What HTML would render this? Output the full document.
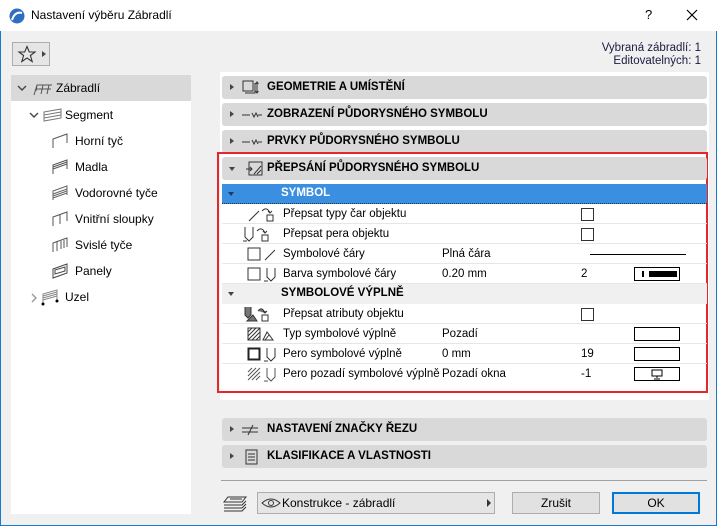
<!DOCTYPE html>
<html><head><meta charset="utf-8"><style>
*{box-sizing:border-box;margin:0;padding:0}
body{width:717px;height:526px;overflow:hidden;font-family:"Liberation Sans",sans-serif;font-size:12px;color:#000;background:#f0f0f0;position:relative}
.a{position:absolute}
.win{position:absolute;left:0;top:0;width:717px;height:526px;border:1px solid #1979ca;border-top:none}
.title{left:0;top:0;width:717px;height:31px;background:#fff}
.hdr{position:absolute;left:222px;width:485px;height:23px;background:#d9d9d9;border-radius:3px;font-weight:bold;font-size:11.5px;line-height:23px}
.hdr .t{position:absolute;left:45px}
.tri{position:absolute;left:8px;top:8px;width:0;height:0;border-left:4px solid #444;border-top:3.5px solid transparent;border-bottom:3.5px solid transparent}
.row{position:absolute;left:222px;width:485px;height:20px;line-height:20px;border-bottom:1px solid #e6e6e6;font-size:11.5px}
.row .l{position:absolute;left:61px}
.row .v{position:absolute;left:220px}
.row .c{position:absolute;left:359px}
.row svg{margin-left:-6px}
.cb{position:absolute;left:359px;top:4px;width:13px;height:13px;border:1px solid #333;background:#fff}
.sw{position:absolute;left:412px;top:3px;width:46px;height:14px;border:1px solid #000;background:#fff}
.tree{font-size:12px}
.tree div{position:absolute;height:20px;line-height:20px}
</style></head><body>
<div class="win"></div>
<div class="a title"></div>
<svg class="a" style="left:9px;top:8px" width="16" height="16"><circle cx="8" cy="8" r="7.5" fill="#2e6fc2"/><path d="M3 12 Q6 3 13 5" stroke="#fff" stroke-width="2" fill="none"/></svg>
<div class="a" style="left:31px;top:8px;font-size:12px">Nastavení výběru Zábradlí</div>
<div class="a" style="left:645px;top:7px;font-size:13px">?</div>
<svg class="a" style="left:686px;top:9px" width="12" height="12"><path d="M1 1L11 11M11 1L1 11" stroke="#000" stroke-width="1.2"/></svg>

<div class="a" style="left:12px;top:42px;width:38px;height:24px;border:1px solid #adadad;background:#e5e5e5"></div>
<svg class="a" style="left:17px;top:45px" width="20" height="18"><path d="M10 1.5L12.3 7H18L13.4 10.5L15.2 16.5L10 13L4.8 16.5L6.6 10.5L2 7H7.7Z" fill="none" stroke="#333" stroke-width="1.1"/></svg>
<div class="a" style="left:42px;top:51px;border-left:4px solid #444;border-top:3px solid transparent;border-bottom:3px solid transparent"></div>
<div class="a" style="right:16px;top:42px;text-align:right;font-size:11.5px;line-height:13px;color:#1a1a40">Vybraná zábradlí: 1<br>Editovatelných: 1</div>

<div class="a" style="left:11px;top:75px;width:180px;height:439px;background:#fff"></div>
<div class="a" style="left:11px;top:75px;width:180px;height:26px;background:#d9d9d9"></div>
<div class="tree">
<svg class="a" style="left:17px;top:85px" width="10" height="7"><path d="M1 1L5 5L9 1" stroke="#444" stroke-width="1.4" fill="none"/></svg>
<svg class="a" style="left:33px;top:82px" width="20" height="14"><path d="M1 13L4 3H19M4 3L3 9M10 3L8 12M16 3L14 12M3 7H18" stroke="#555" fill="none"/></svg>
<div style="left:56px;top:78px">Zábradlí</div>
<svg class="a" style="left:29px;top:112px" width="10" height="7"><path d="M1 1L5 5L9 1" stroke="#444" stroke-width="1.4" fill="none"/></svg>
<svg class="a" style="left:43px;top:108px" width="20" height="14"><path d="M1 4L18 1V10L1 13Z M1 7L18 4M1 10L18 7" stroke="#777" fill="none"/></svg>
<div style="left:65px;top:105px">Segment</div>
<svg class="a" style="left:52px;top:133px" width="16" height="16"><path d="M1 15V6L15 1V10" stroke="#555" fill="none"/></svg>
<div style="left:75px;top:131px">Horní tyč</div>
<svg class="a" style="left:52px;top:159px" width="16" height="16"><path d="M1 15V6L15 1V10M1 8L15 3M1 10L15 5" stroke="#555" fill="none"/></svg>
<div style="left:75px;top:157px">Madla</div>
<svg class="a" style="left:52px;top:185px" width="16" height="16"><path d="M1 15V6L15 1V10M1 9L15 4M1 11L15 6M1 13L15 8" stroke="#666" fill="none"/></svg>
<div style="left:75px;top:183px">Vodorovné tyče</div>
<svg class="a" style="left:52px;top:211px" width="16" height="16"><path d="M1 15V6L15 1V10M8 4V13" stroke="#555" fill="none"/></svg>
<div style="left:75px;top:209px">Vnitřní sloupky</div>
<svg class="a" style="left:52px;top:237px" width="16" height="16"><path d="M1 15V6L15 1V10M5 5V14M9 4V12M12 3V11" stroke="#555" fill="none"/></svg>
<div style="left:75px;top:235px">Svislé tyče</div>
<svg class="a" style="left:52px;top:263px" width="16" height="16"><path d="M1 15V6L15 1V10L1 15ZM3 11V7L13 4V8Z" stroke="#444" fill="none"/></svg>
<div style="left:75px;top:261px">Panely</div>
<svg class="a" style="left:31px;top:293px" width="7" height="10"><path d="M1 1L5 5L1 9" stroke="#999" stroke-width="1.4" fill="none"/></svg>
<svg class="a" style="left:41px;top:288px" width="20" height="18"><path d="M2 16V6L16 2V13M2 8L16 4M2 10L16 6M2 12L16 8" stroke="#888" fill="none"/><circle cx="2" cy="16" r="1.5"/><circle cx="16" cy="13" r="1.5"/></svg>
<div style="left:65px;top:287px">Uzel</div>
</div>

<div class="a" style="left:220px;top:72px;width:489px;height:328px;background:#fff"></div>
<div class="hdr" style="top:76px"><div class="tri"></div><svg class="a" style="left:20px;top:4px" width="20" height="16"><rect x="1" y="1" width="10" height="10" fill="none" stroke="#333"/><path d="M3 13H13V3M15 2V13M13.5 4L15 2L16.5 4M13.5 11L15 13L16.5 11" stroke="#333" fill="none"/></svg><span class="t">GEOMETRIE A UMÍSTĚNÍ</span></div>
<div class="hdr" style="top:103px"><div class="tri"></div><svg class="a" style="left:20px;top:8px" width="20" height="8"><path d="M0 4H8M10 2L12 6L14 2L16 6M16 4H20" stroke="#333" fill="none"/></svg><span class="t">ZOBRAZENÍ PŮDORYSNÉHO SYMBOLU</span></div>
<div class="hdr" style="top:130px"><div class="tri"></div><svg class="a" style="left:20px;top:8px" width="20" height="8"><path d="M0 4H8M10 2L12 6L14 2L16 6M16 4H20" stroke="#333" fill="none"/></svg><span class="t">PRVKY PŮDORYSNÉHO SYMBOLU</span></div>

<div class="a" style="left:217px;top:152px;width:491px;height:241px;border:2px solid #e5262a"></div>
<div class="hdr" style="top:157px"><div class="a" style="left:7px;top:10px;border-top:4px solid #444;border-left:3.5px solid transparent;border-right:3.5px solid transparent"></div><svg class="a" style="left:24px;top:4px" width="18" height="16"><rect x="3" y="1" width="13" height="13" fill="none" stroke="#333"/><path d="M8 13L15 5M11 13L15 9M0 8H6M4 6L6 8L4 10" stroke="#333" fill="none"/></svg><span class="t">PŘEPSÁNÍ PŮDORYSNÉHO SYMBOLU</span></div>

<div class="a" style="left:222px;top:184px;width:485px;height:20px;background:#3b8fe0;border-bottom:1px dotted #234;"></div>
<div class="a" style="left:228px;top:192px;border-top:4px solid #1c3b66;border-left:3.5px solid transparent;border-right:3.5px solid transparent"></div>
<div class="a" style="left:281px;top:187px;color:#fff;font-weight:bold;font-size:11.5px">SYMBOL</div>

<div class="row" style="top:204px"><svg class="a" style="left:32px;top:2px" width="28" height="16"><path d="M1 15L11 5M14 5Q19 0 22 7M20 5L22 7L24 5" stroke="#333" fill="none"/><rect x="19" y="9" width="6" height="6" fill="none" stroke="#333"/></svg><span class="l">Přepsat typy čar objektu</span><div class="cb"></div></div>
<div class="row" style="top:224px"><svg class="a" style="left:27px;top:2px" width="32" height="16"><path d="M2 1V11L6 15L10 11V1M0 15H4M14 5Q19 0 22 7M20 5L22 7L24 5" stroke="#333" fill="none"/><rect x="19" y="9" width="6" height="6" fill="none" stroke="#333"/></svg><span class="l">Přepsat pera objektu</span><div class="cb"></div></div>
<div class="row" style="top:244px"><svg class="a" style="left:27px;top:3px" width="32" height="15"><rect x="5" y="1" width="12" height="12" fill="none" stroke="#333"/><path d="M22 13L32 3" stroke="#333"/></svg><span class="l">Symbolové čáry</span><span class="v">Plná čára</span><div class="a" style="left:368px;top:10px;width:96px;height:1px;background:#000"></div></div>
<div class="row" style="top:264px"><svg class="a" style="left:27px;top:3px" width="34" height="15"><rect x="5" y="1" width="12" height="12" fill="none" stroke="#333"/><path d="M24 1V10L28 14L32 10V1M21 14H25" stroke="#333" fill="none"/></svg><span class="l">Barva symbolové čáry</span><span class="v">0.20 mm</span><span class="c">2</span><div class="sw"><div class="a" style="left:7px;top:3px;width:2px;height:6px;background:#000"></div><div class="a" style="left:14px;top:3px;width:28px;height:6px;background:#000"></div></div></div>

<div class="a" style="left:222px;top:284px;width:485px;height:20px;background:#f0f0f0"></div>
<div class="a" style="left:228px;top:292px;border-top:4px solid #444;border-left:3.5px solid transparent;border-right:3.5px solid transparent"></div>
<div class="a" style="left:281px;top:287px;font-weight:bold;font-size:11.5px">SYMBOLOVÉ VÝPLNĚ</div>

<div class="row" style="top:304px"><svg class="a" style="left:27px;top:2px" width="32" height="16"><path d="M2 1V9L5 12L8 9V1M4 15L10 9L14 15ZM15 5Q19 0 22 7M20 5L22 7L24 5" stroke="#333" fill="#777"/><rect x="19" y="9" width="6" height="6" fill="none" stroke="#333"/></svg><span class="l">Přepsat atributy objektu</span><div class="cb"></div></div>
<div class="row" style="top:324px"><svg class="a" style="left:27px;top:3px" width="32" height="15"><rect x="5" y="1" width="12" height="12" fill="none" stroke="#333"/><path d="M5 9L13 1M5 5L9 1M9 13L17 5M13 13L17 9M5 13L17 1M20 13L24 5L30 13ZM22 13L26 8" stroke="#333" fill="none"/></svg><span class="l">Typ symbolové výplně</span><span class="v">Pozadí</span><div class="sw"></div></div>
<div class="row" style="top:344px"><svg class="a" style="left:27px;top:3px" width="34" height="15"><rect x="5.5" y="1.5" width="11" height="11" fill="none" stroke="#222" stroke-width="2"/><path d="M24 1V10L28 14L32 10V1M21 14H25" stroke="#333" fill="none"/></svg><span class="l">Pero symbolové výplně</span><span class="v">0 mm</span><span class="c">19</span><div class="sw"></div></div>
<div class="row" style="top:364px;border-bottom:none"><svg class="a" style="left:27px;top:3px" width="34" height="15"><path d="M5 9L13 1M5 5L9 1M9 13L17 5M13 13L17 9M5 13L17 1M24 1V10L28 14L32 10V1M21 14H25" stroke="#555" fill="none"/></svg><span class="l">Pero pozadí symbolové výplně</span><span class="v">Pozadí okna</span><span class="c">-1</span><div class="sw"><svg class="a" style="left:16px;top:1px;margin:0" width="12" height="11"><rect x="1" y="1" width="10" height="6" fill="none" stroke="#000"/><path d="M6 7V9M3 10H9" stroke="#000"/></svg></div></div>

<div class="hdr" style="top:418px"><div class="tri"></div><svg class="a" style="left:20px;top:6px" width="20" height="12"><path d="M0 4H16M0 8H16M6 11L11 1" stroke="#333" fill="none"/></svg><span class="t">NASTAVENÍ ZNAČKY ŘEZU</span></div>
<div class="hdr" style="top:445px"><div class="tri"></div><svg class="a" style="left:23px;top:4px" width="14" height="16"><rect x="1" y="1" width="11" height="14" fill="none" stroke="#333"/><path d="M3 5H10M3 8H10M3 11H10" stroke="#333"/></svg><span class="t">KLASIFIKACE A VLASTNOSTI</span></div>

<div class="a" style="left:221px;top:480px;width:486px;height:1px;background:#a0a0a0"></div>
<svg class="a" style="left:222px;top:496px" width="26" height="16"><path d="M6 1H24L20 6H2ZM2 9H20L24 5M2 12H20L24 8M2 15H20L24 11M8 3H20" stroke="#333" fill="none"/></svg>
<div class="a" style="left:257px;top:492px;width:238px;height:22px;border:1px solid #adadad;background:#e5e5e5"></div>
<svg class="a" style="left:261px;top:497px" width="20" height="12"><path d="M1 6Q10 -2 19 6Q10 14 1 6Z" fill="none" stroke="#333"/><circle cx="10" cy="6" r="2.5" fill="none" stroke="#333"/></svg>
<div class="a" style="left:282px;top:496px;font-size:12px">Konstrukce - zábradlí</div>
<div class="a" style="left:487px;top:499px;border-left:4px solid #333;border-top:4px solid transparent;border-bottom:4px solid transparent"></div>
<div class="a" style="left:512px;top:492px;width:88px;height:22px;border:1px solid #adadad;background:#e1e1e1;text-align:center;line-height:20px">Zrušit</div>
<div class="a" style="left:612px;top:492px;width:88px;height:22px;border:2px solid #0078d7;background:#e1e1e1;text-align:center;line-height:18px">OK</div>
</body></html>
